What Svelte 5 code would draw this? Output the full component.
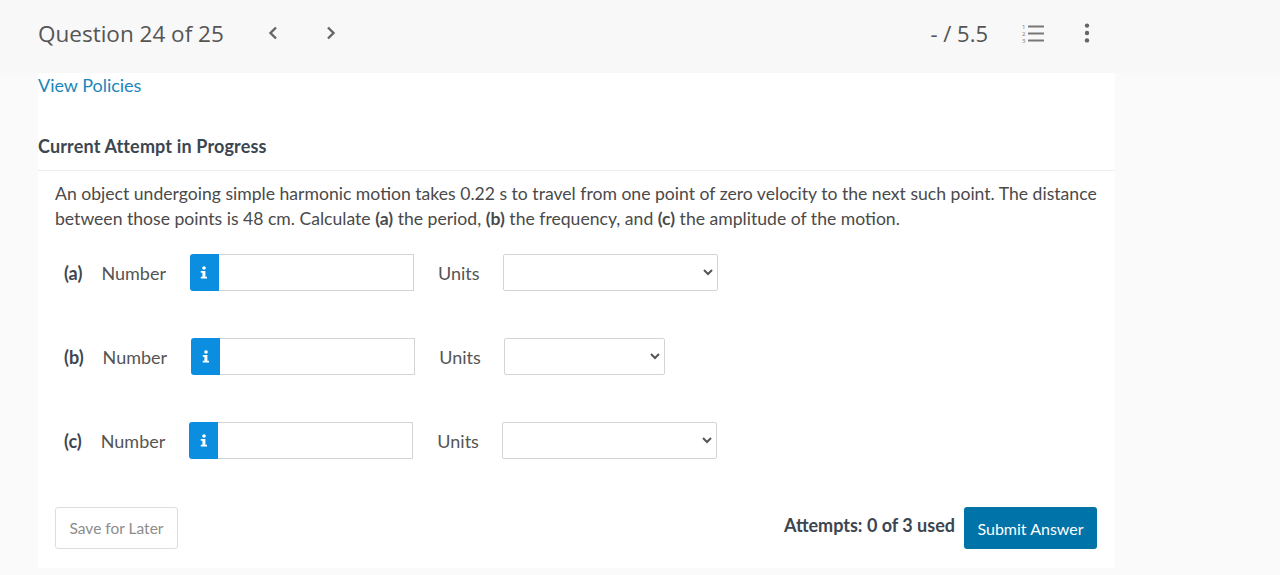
<script lang="ts">
  // Question parts: label and the width of the units dropdown
  const parts = [
    { label: '(a)', selectWidth: 215 },
    { label: '(b)', selectWidth: 161 },
    { label: '(c)', selectWidth: 215 }
  ]
</script>

<div class="page">
  <header class="topbar">
    <div class="topbar-left">
      <span class="question-count">Question 24 of 25</span>
      <button class="nav-btn first" aria-label="Previous question">
        <svg width="10" height="14" viewBox="0 0 10 14"><path d="M8 1.5 L2.5 7 L8 12.5" /></svg>
      </button>
      <button class="nav-btn" aria-label="Next question">
        <svg width="10" height="14" viewBox="0 0 10 14"><path d="M2 1.5 L7.5 7 L2 12.5" /></svg>
      </button>
    </div>
    <div class="topbar-right">
      <span class="score">- / 5.5</span>
      <svg class="list-icon" width="24" height="20" viewBox="0 0 24 20" role="img" aria-label="Question list">
        <text x="1" y="6" font-size="6">1</text>
        <text x="1" y="13" font-size="6">2</text>
        <text x="1" y="20" font-size="6">3</text>
        <rect x="7" y="2.5" width="16" height="2" rx="0.5" />
        <rect x="7" y="9.5" width="16" height="2" rx="0.5" />
        <rect x="7" y="16.5" width="16" height="2" rx="0.5" />
      </svg>
      <svg class="more-icon" width="6" height="20" viewBox="0 0 6 20" role="img" aria-label="More">
        <circle cx="3" cy="2.6" r="2.2" />
        <circle cx="3" cy="10" r="2.2" />
        <circle cx="3" cy="17.4" r="2.2" />
      </svg>
    </div>
  </header>

  <main class="card">
    <a class="policies" href="#policies">View Policies</a>
    <h2 class="attempt-title">Current Attempt in Progress</h2>
    <section class="question">
      <p class="prompt">
        An object undergoing simple harmonic motion takes 0.22 s to travel from one point of zero velocity to the next such point. The
        distance between those points is 48 cm. Calculate <b>(a)</b> the period, <b>(b)</b> the frequency, and <b>(c)</b> the amplitude of the motion.
      </p>

      <div class="parts">
        {#each parts as part}
          <div class="part">
            <b class="part-label">{part.label}</b>
            <span class="number-label">Number</span>
            <span class="info-badge">
              <svg width="8" height="13" viewBox="0 0 8 13" aria-hidden="true">
                <circle cx="4" cy="2" r="1.8" />
                <path d="M0.8 5 H5.4 V10.8 H7 V12.6 H0.8 V10.8 H2.4 V6.8 H0.8 Z" />
              </svg>
            </span>
            <input class="number-input" type="text" aria-label="{part.label} Number" />
            <span class="units-label">Units</span>
            <span class="select-wrap" style="width: {part.selectWidth}px">
              <select aria-label="{part.label} Units"><option></option></select>
              <svg width="10" height="7" viewBox="0 0 10 7" aria-hidden="true"><path d="M1 1 L5 5 L9 1" /></svg>
            </span>
          </div>
        {/each}
      </div>

      <div class="actions">
        <button class="save-btn">Save for Later</button>
        <div class="submit-group">
          <span class="attempts">Attempts: 0 of 3 used</span>
          <button class="submit-btn">Submit Answer</button>
        </div>
      </div>
    </section>
  </main>
</div>

<style>
  :global(body) {
    margin: 0;
    background: #fafafa;
  }

  .page {
    height: 575px;
    overflow: hidden;
    font-family: Lato, "Liberation Sans", sans-serif;
    color: #4a4a4a;
  }

  .topbar {
    height: 73px;
    box-sizing: border-box;
    background: #f8f8f8;
    display: flex;
    align-items: center;
    justify-content: space-between;
    padding: 0 190px 7px 38px;
    font-family: "Open Sans", "Liberation Sans", sans-serif;
  }

  .topbar-left,
  .topbar-right {
    display: flex;
    align-items: center;
  }

  .question-count {
    font-size: 22.5px;
    color: #555;
  }

  .nav-btn {
    width: 10px;
    height: 14px;
    padding: 0;
    border: 0;
    background: none;
    margin-left: 48px;
    display: flex;
  }

  .nav-btn.first {
    margin-left: 44px;
  }

  .nav-btn path {
    fill: none;
    stroke: #666;
    stroke-width: 2.4;
  }

  .score {
    font-size: 22px;
    color: #555;
  }

  .list-icon {
    margin-left: 33px;
    fill: #777;
  }

  .list-icon text {
    font-family: "Open Sans", sans-serif;
  }

  .more-icon {
    margin-left: 39px;
    fill: #666;
  }

  .card {
    width: 1077px;
    height: 495px;
    margin-left: 38px;
    background: #fff;
    display: flex;
    flex-direction: column;
  }

  .policies {
    font-size: 18px;
    line-height: 24px;
    letter-spacing: -0.02px;
    color: #1c86b9;
    text-decoration: none;
  }

  .attempt-title {
    margin: 37px 0 0;
    font-size: 18px;
    line-height: 24px;
    font-weight: 700;
    letter-spacing: 0.15px;
    color: #3c4650;
    padding-bottom: 12px;
    border-bottom: 1px solid #eee;
  }

  .question {
    padding: 10px 18px 0 17px;
  }

  .prompt {
    margin: 0;
    font-size: 17.6px;
    line-height: 25px;
    color: #4a4a4a;
  }

  .parts {
    margin-top: 23px;
    padding-left: 9px;
    display: flex;
    flex-direction: column;
    gap: 47px;
  }

  .part {
    height: 37px;
    display: flex;
    align-items: center;
    font-size: 18px;
    color: #555;
  }

  .part-label {
    color: #3c4650;
    margin-right: 19px;
  }

  .number-label {
    margin-right: 24px;
  }

  .info-badge {
    width: 29px;
    height: 37px;
    box-sizing: border-box;
    flex: none;
    background: #0b8ee0;
    border-radius: 3px 0 0 3px;
    display: flex;
    align-items: center;
    justify-content: center;
    fill: #fff;
  }

  .number-input {
    width: 195px;
    height: 37px;
    box-sizing: border-box;
    flex: none;
    border: 1px solid #d4d4d4;
    border-left: 0;
    background: #fff;
    margin: 0 24px 0 0;
    padding: 0 8px;
  }

  .units-label {
    margin-right: 23px;
  }

  .select-wrap {
    position: relative;
    height: 37px;
    flex: none;
    display: block;
  }

  .select-wrap select {
    appearance: none;
    width: 100%;
    height: 100%;
    border: 1px solid #d4d4d4;
    border-radius: 2px;
    background: #fff;
    display: block;
  }

  .select-wrap svg {
    position: absolute;
    right: 5px;
    top: 15px;
    pointer-events: none;
  }

  .select-wrap path {
    fill: none;
    stroke: #555;
    stroke-width: 2;
  }

  .actions {
    margin-top: 48px;
    display: flex;
    justify-content: space-between;
    align-items: flex-start;
  }

  .save-btn {
    width: 123px;
    height: 42px;
    box-sizing: border-box;
    border: 1px solid #ddd;
    border-radius: 3px;
    background: #fff;
    color: #8c8c8c;
    font: 400 15.5px Lato, "Liberation Sans", sans-serif;
    padding: 0;
  }

  .submit-group {
    display: flex;
    align-items: flex-start;
  }

  .attempts {
    font-size: 18px;
    font-weight: 700;
    line-height: 36px;
    color: #3c4650;
    margin-right: 9px;
  }

  .submit-btn {
    width: 133px;
    height: 42px;
    border: 0;
    border-radius: 3px;
    background: #0073a8;
    color: #fff;
    font: 400 16px Lato, "Liberation Sans", sans-serif;
    padding: 0;
  }
</style>
